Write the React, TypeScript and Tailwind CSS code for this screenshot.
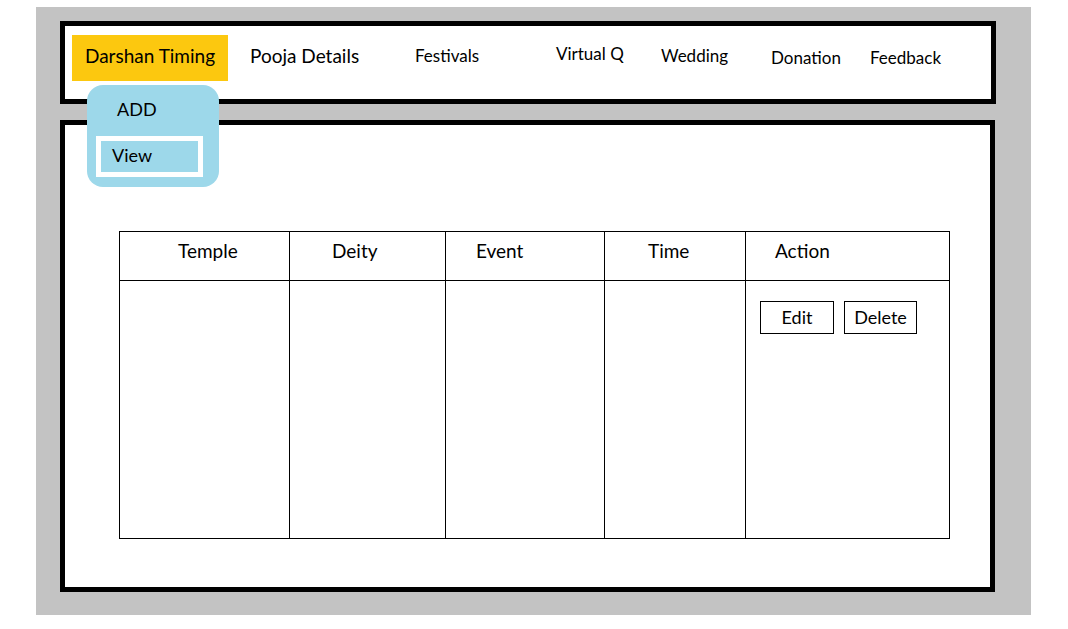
import React from 'react';

const font = { fontFamily: 'Lato, "Open Sans", sans-serif' };

export default function App() {
  return (
    <div className="min-h-screen bg-white text-black" style={font}>
      <div className="relative ml-[36px] pt-[14px] w-[995px] h-[608px] mt-[7px] bg-[#c3c3c3]">
        {/* top nav */}
        <div className="ml-[24px] w-[936px] h-[83px] border-[5px] border-black bg-white flex items-start">
          <div className="ml-[7px] mt-[9px] w-[156px] h-[46px] bg-[#fcc80f] flex items-center justify-center text-[19px] pb-[3px]">
            Darshan Timing
          </div>
          <div className="ml-[22px] w-[165px] mt-[19px] leading-[22px] text-[19px]">Pooja Details</div>
          <div className="w-[141px] mt-[19px] leading-[22px] text-[17px]">Festivals</div>
          <div className="w-[105px] mt-[17px] leading-[22px] text-[17px]">Virtual Q</div>
          <div className="w-[110px] mt-[19px] leading-[22px] text-[17px]">Wedding</div>
          <div className="w-[99px] mt-[21px] leading-[22px] text-[17px]">Donation</div>
          <div className="mt-[21px] leading-[22px] text-[17px]">Feedback</div>
        </div>

        {/* main panel */}
        <div className="ml-[24px] mt-[16px] w-[935px] h-[472px] border-[5px] border-black bg-white pt-[106px] pl-[54px]">
          <div className="w-[831px] border border-black text-[19px]">
            <div className="flex h-[49px] border-b border-black">
              <div className="w-[170px] border-r border-black pl-[58px] pt-[5px]">Temple</div>
              <div className="w-[156px] border-r border-black pl-[42px] pt-[5px]">Deity</div>
              <div className="w-[159px] border-r border-black pl-[30px] pt-[5px]">Event</div>
              <div className="w-[141px] border-r border-black pl-[43px] pt-[5px]">Time</div>
              <div className="flex-1 pl-[29px] pt-[5px]">Action</div>
            </div>
            <div className="flex h-[257px]">
              <div className="w-[170px] border-r border-black" />
              <div className="w-[156px] border-r border-black" />
              <div className="w-[159px] border-r border-black" />
              <div className="w-[141px] border-r border-black" />
              <div className="flex-1 flex items-start pl-[14px] pt-[20px] gap-[10px] text-[18px]">
                <button className="w-[74px] h-[33px] border border-black bg-white flex items-center justify-center">
                  Edit
                </button>
                <button className="w-[73px] h-[33px] border border-black bg-white flex items-center justify-center">
                  Delete
                </button>
              </div>
            </div>
          </div>
        </div>

        {/* dropdown */}
        <div className="absolute left-[51px] top-[78px] w-[132px] h-[102px] rounded-[16px] bg-[#9dd8ea]">
          <div className="ml-[30px] mt-[13px] leading-[22px] text-[18px]">ADD</div>
          <div className="ml-[9px] mt-[16px] w-[107px] h-[41px] border-[5px] border-white pl-[11px] leading-[22px] text-[18px] pt-[3px]">
            View
          </div>
        </div>
      </div>
    </div>
  );
}
